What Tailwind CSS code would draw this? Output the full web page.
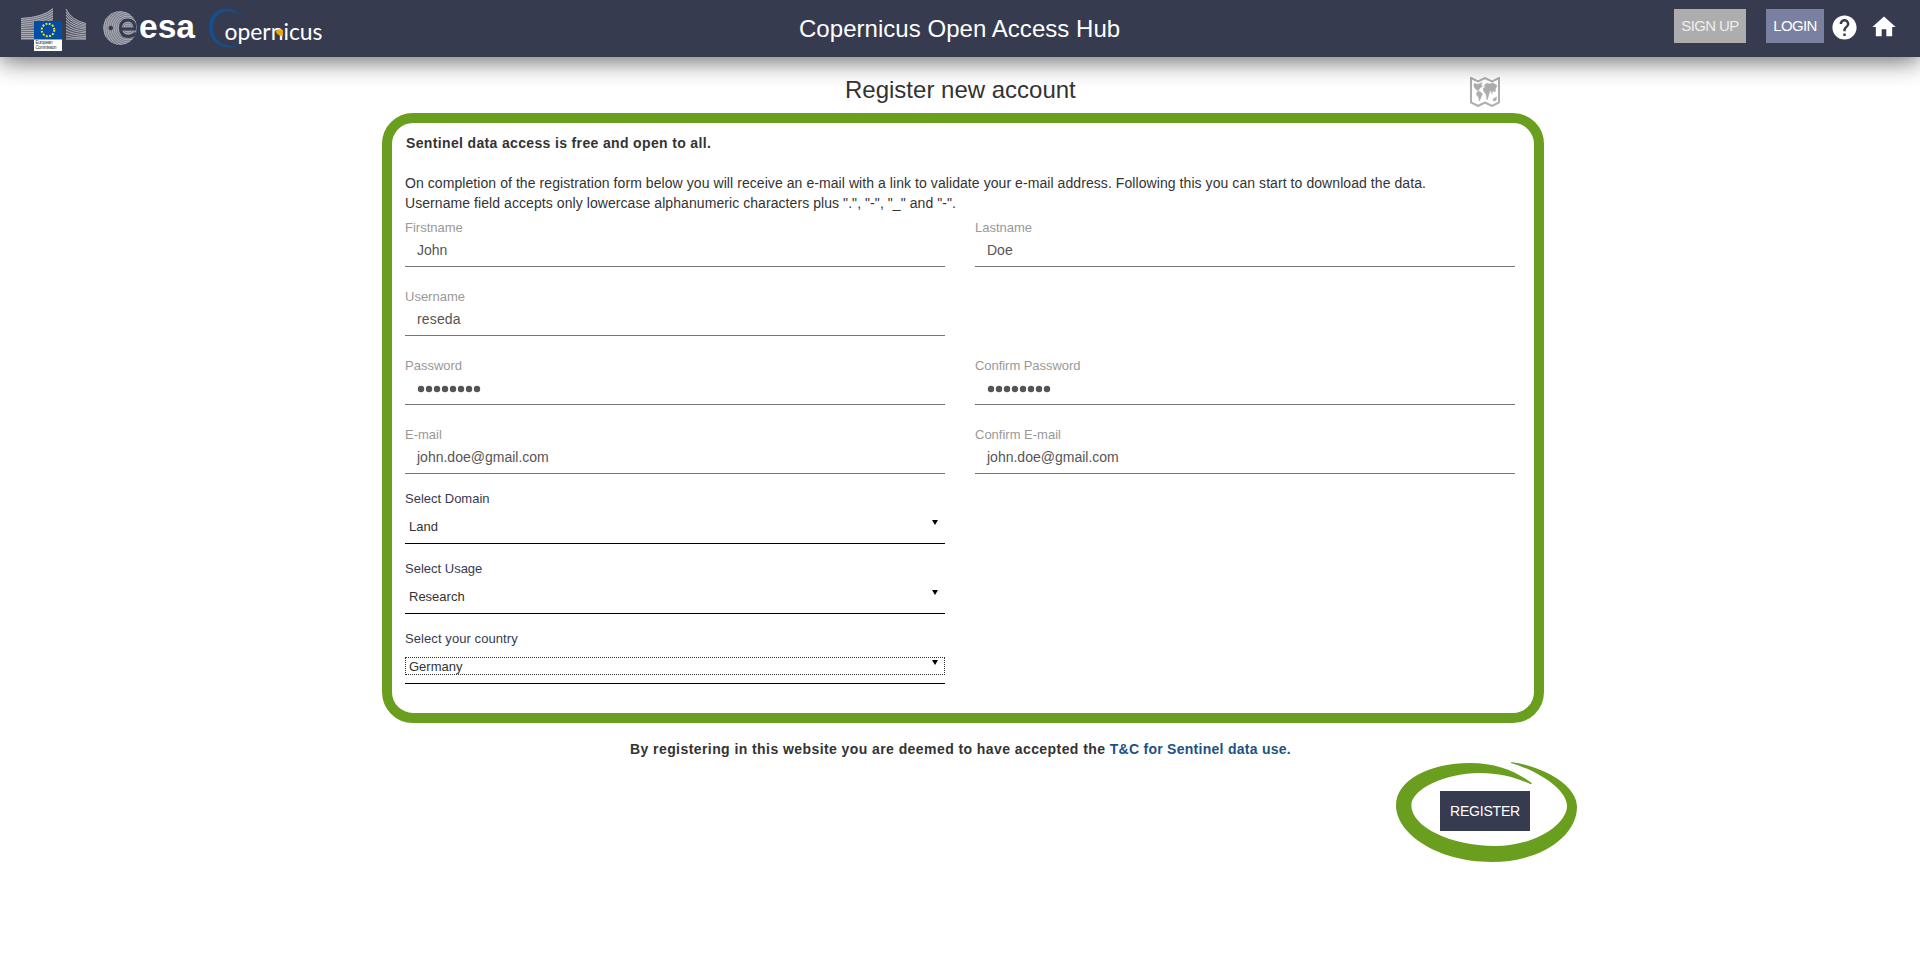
<!DOCTYPE html>
<html lang="en">
<head>
<meta charset="utf-8">
<title>Copernicus Open Access Hub</title>
<script src="https://cdn.jsdelivr.net/npm/@tailwindcss/browser@4"></script>
</head>
<body class="h-[953px] overflow-hidden bg-white font-['Liberation_Sans',Arial,sans-serif] text-sm text-[#333333]">
<header class="relative flex h-[57px] items-start bg-[#373b50] shadow-[0_4px_24px_rgba(0,0,0,0.6)]">
  <svg class="h-[57px] w-[340px] shrink-0" viewBox="0 0 340 57">
    <defs>
      <clipPath id="globe"><circle cx="120" cy="28" r="17"/></clipPath>
    </defs>
    <!-- European Commission -->
    <path d="M21 18 Q43 17 53 8 V21 H34 V40 H21Z" fill="#6d707e"/>
    <path d="M66 8 Q71 20 86 23 V40 H66Z" fill="#555968"/>
    <g fill="none" stroke="#b4b6be" stroke-width="0.9">
      <path d="M21 18.500Q43 17.500 53 8.500M21 20.500Q43 19 53 11M21 22.500Q43 21 53 13.500M21 24.500Q42 23 53 16M21 26.500Q42 25 53 18.500M21 28.500Q32 28 34 27.500M21 30.500H34M21 32.500H34M21 34.500H34M21 36.500H34M21 38.500H34"/>
      <path d="M66 9Q71 20 86 23.500M66 12Q71 22 86 25M66 15Q72 24 86 26.500M66 18Q72 26 86 28M66 21Q73 28 86 29.500M66 24Q73 30 86 31.500M66 27Q73 32 86 33M66 30Q73 34 86 35M66 33Q73 36 86 36.500M66 36Q73 38 86 38.200M66 39H86"/>
    </g>
    <rect x="34" y="21" width="28" height="31" fill="#034ea2"/>
    <circle cx="48" cy="30" r="6.300" fill="none" stroke="#e8df3c" stroke-width="2" stroke-dasharray="1.900 1.400"/>
    <rect x="34" y="39.500" width="28" height="11.500" fill="#fff"/>
    <text x="35.500" y="44.300" font-size="4.500" textLength="17" fill="#333">European</text>
    <text x="35.500" y="49" font-size="4.500" textLength="21" fill="#333">Commission</text>
    <!-- ESA -->
    <g clip-path="url(#globe)">
      <circle cx="120" cy="28" r="17" fill="#7c7f8d"/>
      <g fill="none" stroke="#b0b2bb" stroke-width="0.9">
        <circle cx="128" cy="28" r="2"/><circle cx="128" cy="28" r="4"/><circle cx="128" cy="28" r="6"/><circle cx="128" cy="28" r="8"/><circle cx="128" cy="28" r="10"/><circle cx="128" cy="28" r="12"/><circle cx="128" cy="28" r="14"/><circle cx="128" cy="28" r="16"/><circle cx="128" cy="28" r="18"/><circle cx="128" cy="28" r="20"/><circle cx="128" cy="28" r="22"/><circle cx="128" cy="28" r="24"/>
      </g>
      <circle cx="110.800" cy="28" r="2.300" fill="#373b50"/>
      <path d="M121 29 H135 Q135 20 128 20 Q120.500 20 120.500 28 Q120.500 36.500 128.500 36.500 Q132.500 36.500 136 33" fill="none" stroke="#373b50" stroke-width="3"/>
    </g>
    <text x="139" y="37.500" font-size="34" font-weight="700" textLength="56" lengthAdjust="spacingAndGlyphs" fill="#fff">esa</text>
    <!-- Copernicus -->
    <path d="M245 18 C232 4 209 5 209 27 C209 43 224 51 238 46 C225 48 213 41 213 28 C213 10 230 6 245 18Z" fill="#154f8c"/>
    <text x="224.500" y="40" class="font-['Lato']" font-size="24" textLength="98" lengthAdjust="spacingAndGlyphs" fill="#fff">opernicus</text>
    <path d="M275.500 31 Q278 28 283 30 V36 Q277 36 275.500 31Z" fill="#e5a917"/>
  </svg>
  <h1 class="ml-[440px] mt-[13px] w-[360px] shrink-0 pl-[19px] text-2xl leading-8 tracking-[0.04px] whitespace-nowrap text-white">Copernicus Open Access Hub</h1>
  <nav class="ml-auto flex items-start text-white">
    <a class="mt-[9px] flex h-[34px] w-[72px] justify-center bg-[#adadad] pt-[7px] text-[15px] leading-5 tracking-[-0.6px] whitespace-nowrap text-[#eeeeee]">SIGN UP</a>
    <a class="mt-[9px] ml-5 flex h-[34px] w-[58px] justify-center bg-[#7a80a0] pt-[7px] text-[15px] leading-5 tracking-[-0.6px]">LOGIN</a>
    <svg class="mt-[12.5px] ml-[5.5px] size-[29px]" viewBox="0 0 24 24" fill="#fff"><path d="M12 2C6.480 2 2 6.480 2 12s4.480 10 10 10 10-4.480 10-10S17.520 2 12 2zm1 17h-2v-2h2v2zm2.070-7.750l-.9.920C13.450 12.900 13 13.500 13 15h-2v-.5c0-1.100.45-2.100 1.170-2.830l1.240-1.260c.37-.36.59-.86.59-1.410 0-1.100-.9-2-2-2s-2 .9-2 2H8c0-2.210 1.790-4 4-4s4 1.790 4 4c0 .88-.36 1.680-.93 2.250z"/></svg>
    <svg class="mt-[12.5px] mr-[22px] ml-[11.5px] size-[28px]" viewBox="0 0 24 24" fill="#fff"><path d="M10 20v-6h4v6h5v-8h3L12 3 2 12h3v8z"/></svg>
  </nav>
</header>

<main>
  <div class="flex h-14 items-start">
    <h2 class="ml-[845px] mt-[17px] w-[625px] text-2xl leading-8">Register new account</h2>
    <svg class="mt-5 size-[30px]" viewBox="0 0 30 30"><path d="M1 1 L8 4.500 L15 1 L22 4.500 L29 1 V25.500 L22 29 L15 25.500 L8 29 L1 25.500Z" fill="#fff" stroke="#adadad" stroke-width="2"/><path d="M4 6.500 L8 7.500 L12 5.500 L11 8 L12.500 9 L9 12 L8.500 14 L6 12.500 L4 9.500ZM7 15 L10 14.500 L12.500 17 L11 20 L9.500 24 L8.500 20 L6.500 17.500ZM14 9 L16 6.500 L20 7 L23 6 L27 8.500 L25.500 12 L25 15 L23 13.500 L22 16.500 L20 13 L19 17 L17 23 L16 17 L13.500 14 L13.500 11 L16 10ZM23 22 L26.500 20 L26 23.500 L23.500 24Z" fill="#adadad" stroke="#adadad" stroke-width="0.6"/></svg>
  </div>

  <section class="ml-[382px] h-[610px] w-[1162px] rounded-[31px] border-10 border-[#6a9e1f] px-[13px] pt-[10px]">
    <div class="leading-5 tracking-[0.07px] whitespace-nowrap">
      <p class="mb-5 pl-px font-bold tracking-[0.35px]">Sentinel data access is free and open to all.</p>
      <p>On completion of the registration form below you will receive an e-mail with a link to validate your e-mail address. Following this you can start to download the data.</p>
      <p>Username field accepts only lowercase alphanumeric characters plus ".", "-", "_" and "-".</p>
    </div>
    <form class="mt-[5px]">
      <div class="grid w-[1110px] auto-rows-[69px] grid-cols-2 gap-x-[30px] text-[#555555]">
        <div><label class="block h-[19px] text-[13px] leading-[19px] text-[#999999]">Firstname</label><div class="h-[30px] border-b border-[#757575] pl-3 leading-[27px]">John</div></div>
        <div><label class="block h-[19px] text-[13px] leading-[19px] text-[#999999]">Lastname</label><div class="h-[30px] border-b border-[#757575] pl-3 leading-[27px]">Doe</div></div>
        <div class="col-span-2 w-[540px]"><label class="block h-[19px] text-[13px] leading-[19px] text-[#999999]">Username</label><div class="h-[30px] border-b border-[#757575] pl-3 leading-[27px] tracking-[0.15px]">reseda</div></div>
        <div><label class="block h-[19px] text-[13px] leading-[19px] text-[#999999]">Password</label><div class="flex h-[30px] items-center border-b border-[#757575] pb-px pl-3"><svg class="h-[8px] w-[66px]" viewBox="0 0 66 8" fill="#555"><circle cx="4" cy="4" r="3.200"/><circle cx="12" cy="4" r="3.200"/><circle cx="20" cy="4" r="3.200"/><circle cx="28" cy="4" r="3.200"/><circle cx="36" cy="4" r="3.200"/><circle cx="44" cy="4" r="3.200"/><circle cx="52" cy="4" r="3.200"/><circle cx="60" cy="4" r="3.200"/></svg></div></div>
        <div><label class="block h-[19px] text-[13px] leading-[19px] tracking-[-0.05px] text-[#999999]">Confirm Password</label><div class="flex h-[30px] items-center border-b border-[#757575] pb-px pl-3"><svg class="h-[8px] w-[66px]" viewBox="0 0 66 8" fill="#555"><circle cx="4" cy="4" r="3.200"/><circle cx="12" cy="4" r="3.200"/><circle cx="20" cy="4" r="3.200"/><circle cx="28" cy="4" r="3.200"/><circle cx="36" cy="4" r="3.200"/><circle cx="44" cy="4" r="3.200"/><circle cx="52" cy="4" r="3.200"/><circle cx="60" cy="4" r="3.200"/></svg></div></div>
        <div><label class="block h-[19px] text-[13px] leading-[19px] text-[#999999]">E-mail</label><div class="h-[30px] border-b border-[#757575] pl-3 leading-[27px]">john.doe@gmail.com</div></div>
        <div><label class="block h-[19px] text-[13px] leading-[19px] text-[#999999]">Confirm E-mail</label><div class="h-[30px] border-b border-[#757575] pl-3 leading-[27px]">john.doe@gmail.com</div></div>
      </div>
      <div class="-mt-[6px] w-[540px] text-[13px]">
        <div class="h-[70px]"><label class="block h-[23px] pt-[3px] leading-[15px] text-[#373b50]">Select Domain</label><div class="flex h-[33px] items-start border-b border-black px-1 pt-[7px] leading-[18px]"><span class="flex-1">Land</span><svg class="mt-[2px] mr-[3px] h-[5px] w-[6px]" viewBox="0 0 6 5"><path d="M0 0H6L3 5Z"/></svg></div></div>
        <div class="h-[70px]"><label class="block h-[23px] pt-[3px] leading-[15px] text-[#373b50]">Select Usage</label><div class="flex h-[33px] items-start border-b border-black px-1 pt-[7px] leading-[18px]"><span class="flex-1">Research</span><svg class="mt-[2px] mr-[3px] h-[5px] w-[6px]" viewBox="0 0 6 5"><path d="M0 0H6L3 5Z"/></svg></div></div>
        <div class="h-[70px]"><label class="block h-[23px] pt-[3px] leading-[15px] tracking-[0.08px] text-[#373b50]">Select your country</label><div class="h-[33px] border-b border-black pt-[6px]"><div class="flex h-[18px] items-start border border-dotted border-[#333333] px-[3px] leading-[18px]"><span class="flex-1">Germany</span><svg class="mt-[2px] mr-[3px] h-[5px] w-[6px]" viewBox="0 0 6 5"><path d="M0 0H6L3 5Z"/></svg></div></div></div>
      </div>
    </form>
  </section>

  <p class="mt-4 ml-[630px] leading-5 font-bold tracking-[0.425px] whitespace-nowrap">By registering in this website you are deemed to have accepted the <a class="tracking-[0.27px] text-[#1d5285]">T&amp;C for Sentinel data use.</a></p>

  <div class="relative mt-8 ml-[1440px] h-10 w-[90px]">
    <button type="button" class="block h-10 w-[90px] bg-[#373b50] text-sm tracking-[-0.2px] text-white">REGISTER</button>
    <svg class="pointer-events-none absolute -top-[31px] -left-[45px] h-[103px] w-[183px]" viewBox="45 240 549 309"><path fill="#6a9e1f" d="M394 246 C500 262 591 320 591 380 C591 470 480 546 335 546 C170 546 48 460 48 376 C48 300 150 249 270 249 C350 249 410 275 456 310 L453 313 C410 293 360 279 300 279 C190 279 94 330 94 376 C94 440 210 498 345 498 C470 498 561 430 561 378 C561 330 480 275 393 249Z"/></svg>
  </div>
</main>
</body>
</html>
